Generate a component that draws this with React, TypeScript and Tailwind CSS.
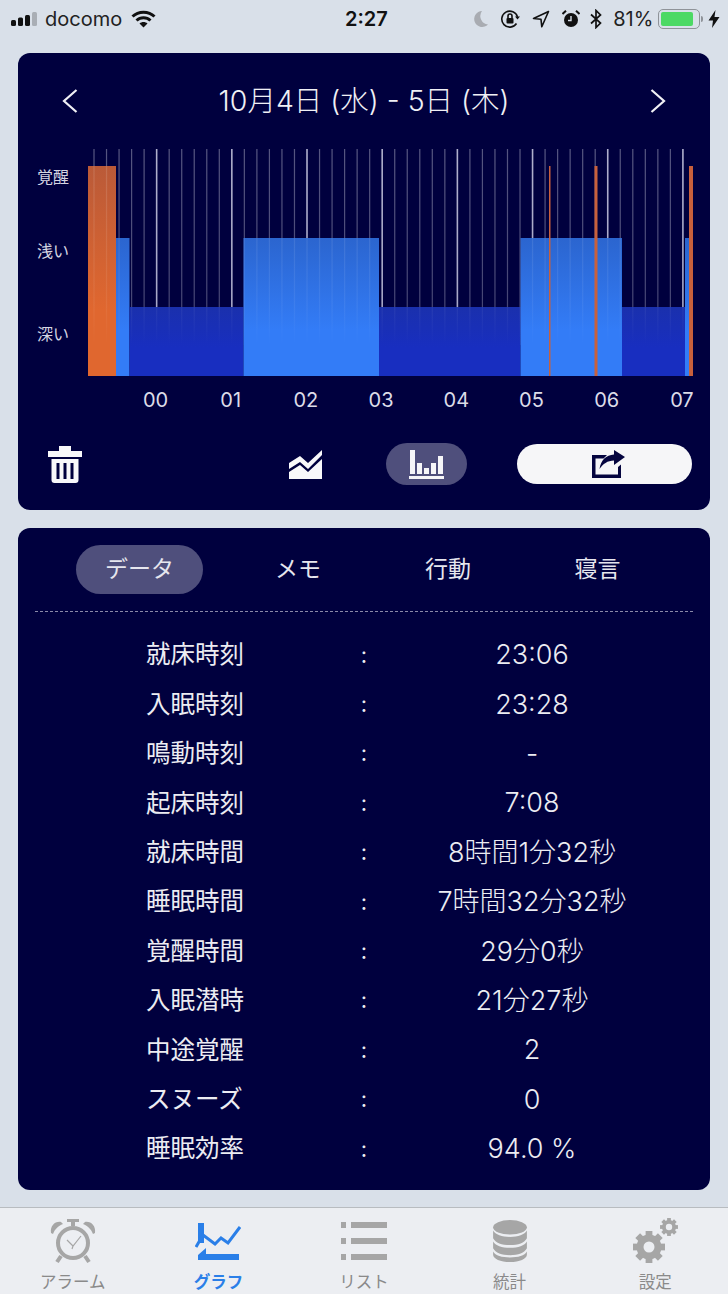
const FONT = "font-['Inter','Noto_Sans_CJK_JP',sans-serif]";

const ROWS = [
  ["就床時刻", "23:06"],
  ["入眠時刻", "23:28"],
  ["鳴動時刻", "-"],
  ["起床時刻", "7:08"],
  ["就床時間", "8時間1分32秒"],
  ["睡眠時間", "7時間32分32秒"],
  ["覚醒時間", "29分0秒"],
  ["入眠潜時", "21分27秒"],
  ["中途覚醒", "2"],
  ["スヌーズ", "0"],
  ["睡眠効率", "94.0 %"],
];

// chart coords are card relative: x = page x - 18, y = page y - 140
const SEGMENTS = [
  { x: 70, w: 28, kind: "awake" },
  { x: 98, w: 13.5, kind: "light" },
  { x: 111.5, w: 114, kind: "deep" },
  { x: 225.5, w: 135.5, kind: "light" },
  { x: 361, w: 141.5, kind: "deep" },
  { x: 502.5, w: 101.5, kind: "light" },
  { x: 604, w: 63, kind: "deep" },
  { x: 667, w: 4, kind: "light" },
  { x: 671, w: 4, kind: "awake" },
  { x: 531, w: 1.5, kind: "awake" },
  { x: 576.5, w: 3, kind: "awake" },
];

const TOPS: Record<string, number> = { awake: 26, light: 98, deep: 167 };
const BOTTOM = 236;
const GRID = Array.from({ length: 48 }, (_, i) => i);

function SleepChart() {
  return (
    <svg width="692" height="290" className="block">
      <defs>
        <linearGradient id="awake" x1="0" y1="26" x2="0" y2="170" gradientUnits="userSpaceOnUse">
          <stop offset="0" stopColor="#ba5a38" />
          <stop offset="1" stopColor="#e0672f" />
        </linearGradient>
        <linearGradient id="light" x1="0" y1="98" x2="0" y2="190" gradientUnits="userSpaceOnUse">
          <stop offset="0" stopColor="#2b65cf" />
          <stop offset="1" stopColor="#337cf7" />
        </linearGradient>
        <linearGradient id="deep" x1="0" y1="167" x2="0" y2="236" gradientUnits="userSpaceOnUse">
          <stop offset="0" stopColor="#1a30ad" />
          <stop offset="0.6" stopColor="#182ec0" />
        </linearGradient>
        <linearGradient id="fade" x1="0" y1="9" x2="0" y2="205" gradientUnits="userSpaceOnUse">
          <stop offset="0" stopColor="#ffffff" stopOpacity="0.14" />
          <stop offset="0.8" stopColor="#ffffff" stopOpacity="0.06" />
          <stop offset="1" stopColor="#ffffff" stopOpacity="0" />
        </linearGradient>
      </defs>
      {/* grid behind the bars, a faint copy goes over them */}
      {GRID.map((i) => {
        const x = 76 + i * 12.53;
        const major = (i - 5) % 6 === 0;
        return (
          <line
            key={i}
            x1={x}
            x2={x}
            y1={9}
            y2={205}
            stroke={major ? "#a3a3c4" : "#3a3a6c"}
            strokeWidth={major ? 1.6 : 1.2}
          />
        );
      })}
      {SEGMENTS.filter((s) => s.kind !== "awake" || s.w > 5).map((s) => (
        <rect key={s.x} x={s.x} y={TOPS[s.kind]} width={s.w} height={BOTTOM - TOPS[s.kind]} fill={`url(#${s.kind})`} />
      ))}
      {GRID.map((i) => {
        const x = 76 + i * 12.53;
        return <rect key={i} x={x - 0.6} y={9} width={1.2} height={196} fill="url(#fade)" />;
      })}
      {SEGMENTS.filter((s) => s.kind === "awake" && s.w <= 5).map((s) => (
        <rect key={s.x} x={s.x} y={26} width={s.w} height={210} fill="#c8603c" />
      ))}
      <g fill="#d6d6e2" fontSize="16">
        <text x="19" y="43">覚醒</text>
        <text x="19" y="117">浅い</text>
        <text x="19" y="200">深い</text>
      </g>
      <g fill="#dcdce8" fontSize="20" textAnchor="middle">
        {["00", "01", "02", "03", "04", "05", "06", "07"].map((h, i) => (
          <text key={h} x={137.5 + i * 75.2} y={267}>{h}</text>
        ))}
      </g>
    </svg>
  );
}

function StatusBar() {
  return (
    <div className="flex h-[37px] items-center text-black relative">
      <svg width="26" height="14" className="ml-[11px]" viewBox="0 0 26 14">
        <rect x="0" y="8" width="5" height="6" rx="1.5" fill="#111" />
        <rect x="7" y="5.5" width="5" height="8.5" rx="1.5" fill="#111" />
        <rect x="14" y="3" width="5" height="11" rx="1.5" fill="#111" />
        <rect x="21" y="0" width="5" height="14" rx="1.5" fill="#a9aeb5" />
      </svg>
      <span className="ml-[8px] text-[20px] leading-none text-[#222]">docomo</span>
      <svg width="25" height="18" viewBox="0 0 25 18" className="ml-[9px]" fill="none" stroke="#111" strokeWidth="3">
        <path d="M1.5 6.5C7.5 .8 17.5 .8 23.5 6.5" />
        <path d="M5.5 10.5C9.5 6.8 15.5 6.8 19.5 10.5" />
        <path d="M12.5 17.5 8.5 13.6C10.8 11.6 14.2 11.6 16.5 13.6Z" fill="#111" stroke="none" />
      </svg>
      <span className="absolute left-[345px] text-[20px] font-semibold leading-none text-[#111]">2:27</span>
      <svg width="16" height="18" viewBox="0 0 16 18" className="ml-[317px]">
        <path d="M9 1A8 8 0 1 0 15 14.5 8.5 8.5 0 0 1 9 1Z" fill="#a9acb2" />
      </svg>
      <svg width="20" height="20" viewBox="0 0 20 20" fill="none" stroke="#111" strokeWidth="1.6" className="ml-[11px]">
        <path d="M17.5 8A8 8 0 1 0 16.5 14.5" />
        <path d="M15 7.5h5l-2.5 3Z" fill="#111" stroke="none" />
        <rect x="6.5" y="9" width="7" height="5.5" rx="1" fill="#111" stroke="none" />
        <path d="M8 9V7a2 2 0 0 1 4 0v2" />
      </svg>
      <svg width="18" height="18" viewBox="0 0 18 18" className="ml-[12px]" fill="none" stroke="#111" strokeWidth="1.6">
        <path d="M16.5 1.5 1.5 8.5l7.5 .8 .8 7.5Z" strokeLinejoin="round" />
      </svg>
      <svg width="18" height="18" viewBox="0 0 18 18" className="ml-[12px]">
        <circle cx="9" cy="10" r="7" fill="#111" />
        <path d="M9 6v4.500h-3" fill="none" stroke="#d9e0e9" strokeWidth="1.4" />
        <path d="M0.500 4 4 .8M17.500 4 14 .8" stroke="#111" strokeWidth="2" />
      </svg>
      <svg width="12" height="20" viewBox="0 0 12 20" className="ml-[10px]" fill="none" stroke="#111" strokeWidth="1.7">
        <path d="M1 5.500 10.500 14 6 18.500V1.500L10.500 6 1 14.500" />
      </svg>
      <span className="ml-[11px] text-[20px] leading-none text-[#222]">81%</span>
      <div className="ml-[5px] flex h-[20px] w-[42px] items-center rounded-[5px] border-[1.5px] border-[#8f9399] p-[2px]">
        <div className="h-full w-[32px] rounded-[2px] bg-[#4cd964]" />
      </div>
      <div className="ml-[1px] h-[6px] w-[2px] rounded-r-sm bg-[#8f9399]" />
      <svg width="12" height="18" viewBox="0 0 12 18" className="ml-[5px]">
        <path d="M7.500 0 0.500 10.500h4.500L4 18l7.500-11H6.500Z" fill="#111" />
      </svg>
    </div>
  );
}

function Toolbar() {
  return (
    <div className="mt-[13px] flex h-[42px] items-center">
      <svg width="34" height="37" viewBox="0 0 34 37" className="ml-[30px]" fill="#f8f8fa">
        <path d="M11 0h12v5h11v6H0V5h11Z" />
        <path
          d="M3.500 13h27v21a3 3 0 0 1-3 3h-21a3 3 0 0 1-3-3ZM8.500 17v16h3V17Zm7 0v16h3V17Zm7 0v16h3V17Z"
          fillRule="evenodd"
        />
      </svg>
      <svg width="33" height="29" viewBox="0 0 33 29" className="ml-[207px]" fill="#f8f8fa">
        <path d="M0 13 11 6l8 7L33 0v5L19 19l-8-7-11 7Z" />
        <path d="M0 29v-7l11-7 8 7L33 9v20Z" />
      </svg>
      <div className="ml-[64px] flex h-[42px] w-[81px] items-center justify-center rounded-full bg-[#4f4f7c]">
        <svg width="35" height="29" viewBox="0 0 35 29" fill="#f5f5f8">
          <rect x="1" y="0" width="5" height="24" />
          <rect x="8" y="13" width="5" height="11" />
          <rect x="15" y="18" width="5" height="6" />
          <rect x="22" y="13" width="5" height="11" />
          <rect x="29" y="6" width="5" height="18" />
          <rect x="0" y="26" width="35" height="3" />
        </svg>
      </div>
      <div className="ml-[50px] flex h-[40px] w-[175px] items-center justify-center rounded-full bg-[#f6f6f8]">
        <svg width="33" height="28" viewBox="0 0 33 28" className="mr-[-7px]" fill="#05053f">
          <path d="M0 5h15l-3.500 3.500H3.500v16H26V17l3-2.500V28H0Z" />
          <path d="M33 7 22 0v4.500C14 5 9 10 7.500 19 11 14 15.500 10.500 22 10.500V15Z" />
        </svg>
      </div>
    </div>
  );
}

function Tabs() {
  return (
    <div className="flex pl-[58px] pt-[17px] text-[23px] text-[#e6e6ee]">
      <div className="flex h-[49px] w-[127px] items-center justify-center rounded-full bg-[#4f4f7c]">データ</div>
      <div className="ml-[20px] flex h-[49px] w-[150px] items-center justify-center">メモ</div>
      <div className="flex h-[49px] w-[150px] items-center justify-center">行動</div>
      <div className="flex h-[49px] w-[149px] items-center justify-center">寝言</div>
    </div>
  );
}

const GRAY = "#a6a6a6";

function AlarmIcon() {
  return (
    <svg width="46" height="46" viewBox="0 0 46 46" fill="none">
      <circle cx="23" cy="25" r="15" stroke={GRAY} strokeWidth="4" />
      <path d="M1 15C0 8 5 3 11 4L13 6C8 8 5 11 3 16ZM45 15C46 8 41 3 35 4L33 6C38 8 41 11 43 16Z" fill={GRAY} />
      <path d="M17 1h12v3h-4v4h-4V4h-4Z" fill={GRAY} />
      <path d="M11 38 7 44M35 38l4 6" stroke={GRAY} strokeWidth="4" />
      <path d="M31 18 23 28 17 22M23 28l-1 3" stroke={GRAY} strokeWidth="1.200" />
    </svg>
  );
}

function GraphIcon() {
  return (
    <svg width="46" height="42" viewBox="0 0 46 42" fill="none">
      <rect x="3" y="3" width="6" height="20" fill="#2a7fe8" />
      <path d="M1 27 8 15 20 24 26 18 33 23 45 7" stroke="#2a7fe8" strokeWidth="3" />
      <path d="M3 40V35L11 28V34H44V40Z" fill="#2a7fe8" />
    </svg>
  );
}

function ListIcon() {
  return (
    <svg width="46" height="40" viewBox="0 0 46 40" fill={GRAY}>
      <rect x="0" y="1" width="5" height="6" />
      <rect x="10" y="1" width="36" height="6" />
      <rect x="0" y="17" width="5" height="6" />
      <rect x="10" y="17" width="36" height="6" />
      <rect x="0" y="33" width="5" height="6" />
      <rect x="10" y="33" width="36" height="6" />
    </svg>
  );
}

function DatabaseIcon() {
  return (
    <svg width="38" height="42" viewBox="0 0 38 46" fill={GRAY}>
      <ellipse cx="19" cy="8" rx="18.500" ry="8" />
      <path d="M.5 11.500C3 16 10 18.500 19 18.500s16-2.500 18.500-7V20C35 25 28 27.500 19 27.500S3 25 .5 20Z" />
      <path d="M.5 23.500C3 28 10 30.500 19 30.500s16-2.500 18.500-7V31C35 36 28 38.500 19 38.500S3 36 .5 31Z" />
      <path d="M.5 34.500C3 39 10 41 19 41s16-2 18.500-6.500V38c0 4.500-8 8-18.500 8S.5 42.500.5 38Z" />
    </svg>
  );
}

function Gear({ cx, cy, r, hole }: { cx: number; cy: number; r: number; hole: number }) {
  return (
    <g>
      {[0, 45, 90, 135].map((deg) => (
        <rect
          key={deg}
          x={cx - r * 0.27}
          y={cy - r * 1.28}
          width={r * 0.54}
          height={r * 2.56}
          fill={GRAY}
          transform={`rotate(${deg} ${cx} ${cy})`}
        />
      ))}
      <circle cx={cx} cy={cy} r={r} fill={GRAY} />
      <circle cx={cx} cy={cy} r={hole} fill="#eceef2" />
    </g>
  );
}

function SettingsIcon() {
  return (
    <svg width="48" height="48" viewBox="0 0 48 48">
      <Gear cx={18} cy={30} r={12.500} hole={5.500} />
      <Gear cx={38} cy={10} r={7} hole={3.200} />
    </svg>
  );
}

const NAV = [
  { label: "アラーム", icon: <AlarmIcon /> },
  { label: "グラフ", icon: <GraphIcon />, active: true },
  { label: "リスト", icon: <ListIcon /> },
  { label: "統計", icon: <DatabaseIcon /> },
  { label: "設定", icon: <SettingsIcon /> },
];

function TabBar() {
  return (
    <nav className="mt-[17px] grid h-[87px] grid-cols-5 border-t border-[#b8bcc0] bg-[#eceef2]">
      {NAV.map((item) => (
        <div key={item.label} className="flex flex-col items-center pt-[9px]">
          <div className="flex h-[48px] items-center justify-center">{item.icon}</div>
          <span
            className={`mt-[7px] text-[16.500px] leading-[20px] ${item.active ? "font-bold text-[#2a7fe8]" : "text-[#8a8a8a]"}`}
          >
            {item.label}
          </span>
        </div>
      ))}
    </nav>
  );
}

export default function App() {
  return (
    <div className={`${FONT} h-[1294px] w-[728px] overflow-hidden bg-[#d9e0e9]`}>
      <StatusBar />
      <main className="px-[18px] pt-[16px]">
        <section className="h-[457px] rounded-[12px] bg-[#00003e]">
          <header className="flex h-[87px] items-center justify-between px-[44px] pt-[9px] text-[#f0f0f5]">
            <svg width="16" height="24" viewBox="0 0 16 24" fill="none" stroke="currentColor" strokeWidth="2.200">
              <path d="M14.500 1 2 12l12.500 11" />
            </svg>
            <h1 className="text-[28.500px] font-light leading-none">10月4日 (水) - 5日 (木)</h1>
            <svg width="16" height="24" viewBox="0 0 16 24" fill="none" stroke="currentColor" strokeWidth="2.200">
              <path d="M1.500 1 14 12 1.500 23" />
            </svg>
          </header>
          <SleepChart />
          <Toolbar />
        </section>
        <section className="mt-[18px] h-[662px] rounded-[12px] bg-[#00003e]">
          <Tabs />
          <div className="mx-[17px] mt-[17px] border-t border-dashed border-[#8a8aa8]" />
          <div className="mt-[18px] grid grid-cols-[200px_36px_300px] pl-[128px] text-[#ececf2]">
            {ROWS.map(([label, value]) => (
              <div key={label} className="col-span-3 grid h-[49.4px] grid-cols-subgrid items-center">
                <span className="text-[24.500px] leading-none">{label}</span>
                <span className="text-center text-[22px] leading-none">:</span>
                <span className="text-center text-[27px] font-light leading-none">{value}</span>
              </div>
            ))}
          </div>
        </section>
      </main>
      <TabBar />
    </div>
  );
}
